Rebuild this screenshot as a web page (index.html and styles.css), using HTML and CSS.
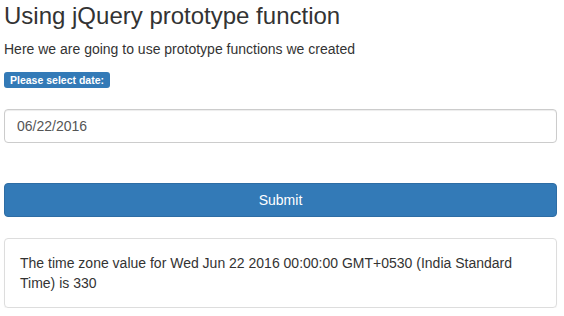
FILE: index.html
```html
<!DOCTYPE html>
<html lang="en">
<head>
    <meta charset="UTF-8">
    <meta name="viewport" content="width=device-width, initial-scale=1.0">
    <title>Using jQuery prototype function</title>
    <link rel="stylesheet" href="styles.css">
</head>
<body>
    <div class="page">
        <h1>Using jQuery prototype function</h1>
        <p class="intro">Here we are going to use prototype functions we created</p>

        <!-- date form -->
        <label class="badge" for="date-input">Please select date:</label>
        <input type="text" id="date-input" class="date-input" value="06/22/2016">
        <button class="submit-btn" id="submit">Submit</button>

        <!-- result -->
        <div class="result">
            The time zone value for Wed Jun 22 2016 00:00:00 GMT+0530 (India Standard Time) is 330
        </div>
    </div>
</body>
</html>
```

FILE: styles.css
```css
/* basic page styles */
body {
    margin: 0;
    font-family: "Liberation Sans", Arial, sans-serif;
    font-size: 14px;
    color: #333;
    background: #fff;
}

.page {
    padding: 0 7px 0 4px;
}

h1 {
    margin: 3px 0 10px;
    font-size: 24px;
    line-height: 26px;
    font-weight: normal;
}

.intro {
    margin: 0 0 13px;
    line-height: 20px;
}

.badge {
    display: block;
    width: fit-content;
    margin-bottom: 21px;
    padding: 0 6px;
    height: 16px;
    line-height: 16px;
    font-size: 10.5px;
    font-weight: bold;
    color: #fff;
    background-color: #337ab7;
    border-radius: 3px;
}

.date-input {
    display: block;
    box-sizing: border-box;
    width: 100%;
    height: 34px;
    padding: 6px 12px;
    font-family: inherit;
    font-size: 14px;
    color: #555;
    border: 1px solid #ccc;
    border-radius: 4px;
    box-shadow: inset 0 1px 1px rgba(0, 0, 0, 0.075);
}

.submit-btn {
    display: block;
    box-sizing: border-box;
    width: 100%;
    height: 34px;
    margin-top: 40px;
    font-family: inherit;
    font-size: 14px;
    color: #fff;
    background-color: #337ab7;
    border: 1px solid #2e6da4;
    border-radius: 4px;
    cursor: pointer;
}

.result {
    margin-top: 21px;
    padding: 14px 15px;
    line-height: 20px;
    border: 1px solid #ddd;
    border-radius: 4px;
    box-shadow: 0 1px 1px rgba(0, 0, 0, 0.05);
}
```
